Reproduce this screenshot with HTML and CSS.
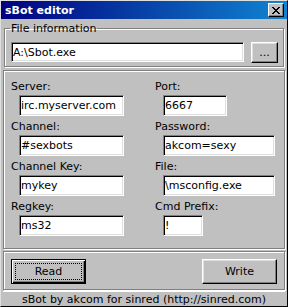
FILE: index.html
```html
<!DOCTYPE html>
<html lang="en">
<head>
    <meta charset="UTF-8">
    <title>sBot editor</title>
    <link rel="stylesheet" href="styles.css">
</head>
<body>
    <div class="window">
        <div class="titlebar">
            <span class="title">sBot editor</span>
            <button class="close-btn" aria-label="Close">
                <svg width="8" height="7" viewBox="0 0 8 7">
                    <path d="M0 0h2v1h1v1h2v-1h1v-1h2v1h-1v1h-1v1h-1v1h1v1h1v1h1v1h-2v-1h-1v-1h-2v1h-1v1h-2v-1h1v-1h1v-1h1v-1h-1v-1h-1v-1h-1z" fill="#000"/>
                </svg>
            </button>
        </div>

        <div class="client">
            <!-- File information -->
            <fieldset class="group">
                <legend>File information</legend>
                <div class="file-row">
                    <input class="text-box" type="text" value="A:\Sbot.exe" readonly>
                    <button class="btn browse-btn">...</button>
                </div>
            </fieldset>

            <!-- Settings -->
            <div class="panel fields">
                <div class="field">
                    <label>Server:</label>
                    <input class="text-box w-server" type="text" value="irc.myserver.com" readonly>
                </div>
                <div class="field">
                    <label>Port:</label>
                    <input class="text-box w-port" type="text" value="6667" readonly>
                </div>
                <div class="field">
                    <label>Channel:</label>
                    <input class="text-box w-server" type="text" value="#sexbots" readonly>
                </div>
                <div class="field">
                    <label>Password:</label>
                    <input class="text-box w-wide" type="text" value="akcom=sexy" readonly>
                </div>
                <div class="field">
                    <label>Channel Key:</label>
                    <input class="text-box w-server" type="text" value="mykey" readonly>
                </div>
                <div class="field">
                    <label>File:</label>
                    <input class="text-box w-wide" type="text" value="\msconfig.exe" readonly>
                </div>
                <div class="field">
                    <label>Regkey:</label>
                    <input class="text-box w-server" type="text" value="ms32" readonly>
                </div>
                <div class="field">
                    <label>Cmd Prefix:</label>
                    <input class="text-box w-prefix" type="text" value="!" readonly>
                </div>
            </div>

            <!-- Actions -->
            <div class="panel actions">
                <button class="btn action-btn default-btn"><span class="focus-rect">Read</span></button>
                <button class="btn action-btn"><span class="plain">Write</span></button>
            </div>
        </div>

        <div class="status">sBot by akcom for sinred (http://sinred.com)</div>
    </div>
</body>
</html>
```

FILE: styles.css
```css
body {
    margin: 0;
    padding: 0;
    background: #c0c0c0;
    font-family: "DejaVu Sans", Tahoma, sans-serif;
    font-size: 11px;
    color: #000;
}
.window {
    width: 288px;
    height: 307px;
    box-sizing: border-box;
    border: 1px solid;
    border-color: #dfdfdf #000 #000 #dfdfdf;
    display: flex;
    flex-direction: column;
    background: #c0c0c0;
}
.titlebar {
    height: 18px;
    flex: none;
    display: flex;
    align-items: center;
    justify-content: space-between;
    padding: 0 3px 0 4px;
    background: linear-gradient(to right, #000080, #1084d0);
    color: #fff;
}
.title {
    font-weight: bold;
    font-size: 11px;
}
.close-btn {
    width: 16px;
    height: 14px;
    padding: 0;
    margin: 0;
    display: flex;
    align-items: center;
    justify-content: center;
    background: #c0c0c0;
    border: 1px solid;
    border-color: #fff #000 #000 #fff;
    box-shadow: inset -1px -1px #808080;
}
.client {
    flex: 1;
    display: flex;
    flex-direction: column;
    padding: 0 3px;
}
.group {
    margin: 3px 0 0;
    padding: 7px 5px 3px 6px;
    border: 1px solid #808080;
    box-shadow: inset 1px 1px #fff, 1px 1px #fff;
}
.group legend {
    padding: 0 1px;
    margin-left: -1px;
    line-height: 13px;
}
.file-row {
    display: flex;
    align-items: flex-start;
    gap: 7px;
}
.file-row .text-box {
    flex: 1;
    min-width: 0;
    height: 20px;
}
.text-box {
    height: 21px;
    box-sizing: border-box;
    margin: 0;
    padding: 0 1px;
    font: inherit;
    color: #000;
    background: #fff;
    border: 1px solid;
    border-color: #808080 #fff #fff #808080;
    box-shadow: inset 1px 1px #000, inset -1px -1px #dfdfdf;
    outline: none;
}
.btn {
    box-sizing: border-box;
    margin: 0;
    padding: 0;
    font: inherit;
    color: #000;
    background: #c0c0c0;
    border: 1px solid;
    border-color: #fff #000 #000 #fff;
    box-shadow: inset -1px -1px #808080, inset 1px 1px #dfdfdf;
}
.browse-btn {
    width: 27px;
    height: 21px;
}
.panel {
    margin: 0 -1px;
    border: 1px solid #808080;
    box-shadow: inset 1px 1px #fff, 1px 1px #fff;
}
.fields {
    margin-top: 3px;
    padding: 9px 6px 12px 7px;
    display: grid;
    grid-template-columns: 144px 1fr;
    row-gap: 4px;
}
.field {
    display: flex;
    flex-direction: column;
    align-items: flex-start;
}
.field label {
    line-height: 13px;
    margin-bottom: 2px;
}
.field .text-box {
    margin-left: 8px;
}
.w-server { width: 105px; }
.w-port { width: 64px; }
.w-wide { width: 112px; }
.w-prefix { width: 40px; }
.actions {
    margin-top: 2px;
    padding: 7px 7px 5px;
    display: flex;
    justify-content: space-between;
}
.action-btn {
    width: 75px;
    height: 25px;
    display: flex;
    padding: 3px;
}
.default-btn {
    border-color: #000;
    box-shadow: inset 1px 1px #fff, inset -1px -1px #000, inset -2px -2px #808080;
}
.focus-rect,
.plain {
    flex: 1;
    display: flex;
    align-items: center;
    justify-content: center;
    border: 1px dotted transparent;
}
.focus-rect {
    border-color: #000;
}
.status {
    height: 16px;
    flex: none;
    margin: 1px 2px 0;
    line-height: 15px;
    text-align: center;
    border-top: 1px solid #fff;
}
```
